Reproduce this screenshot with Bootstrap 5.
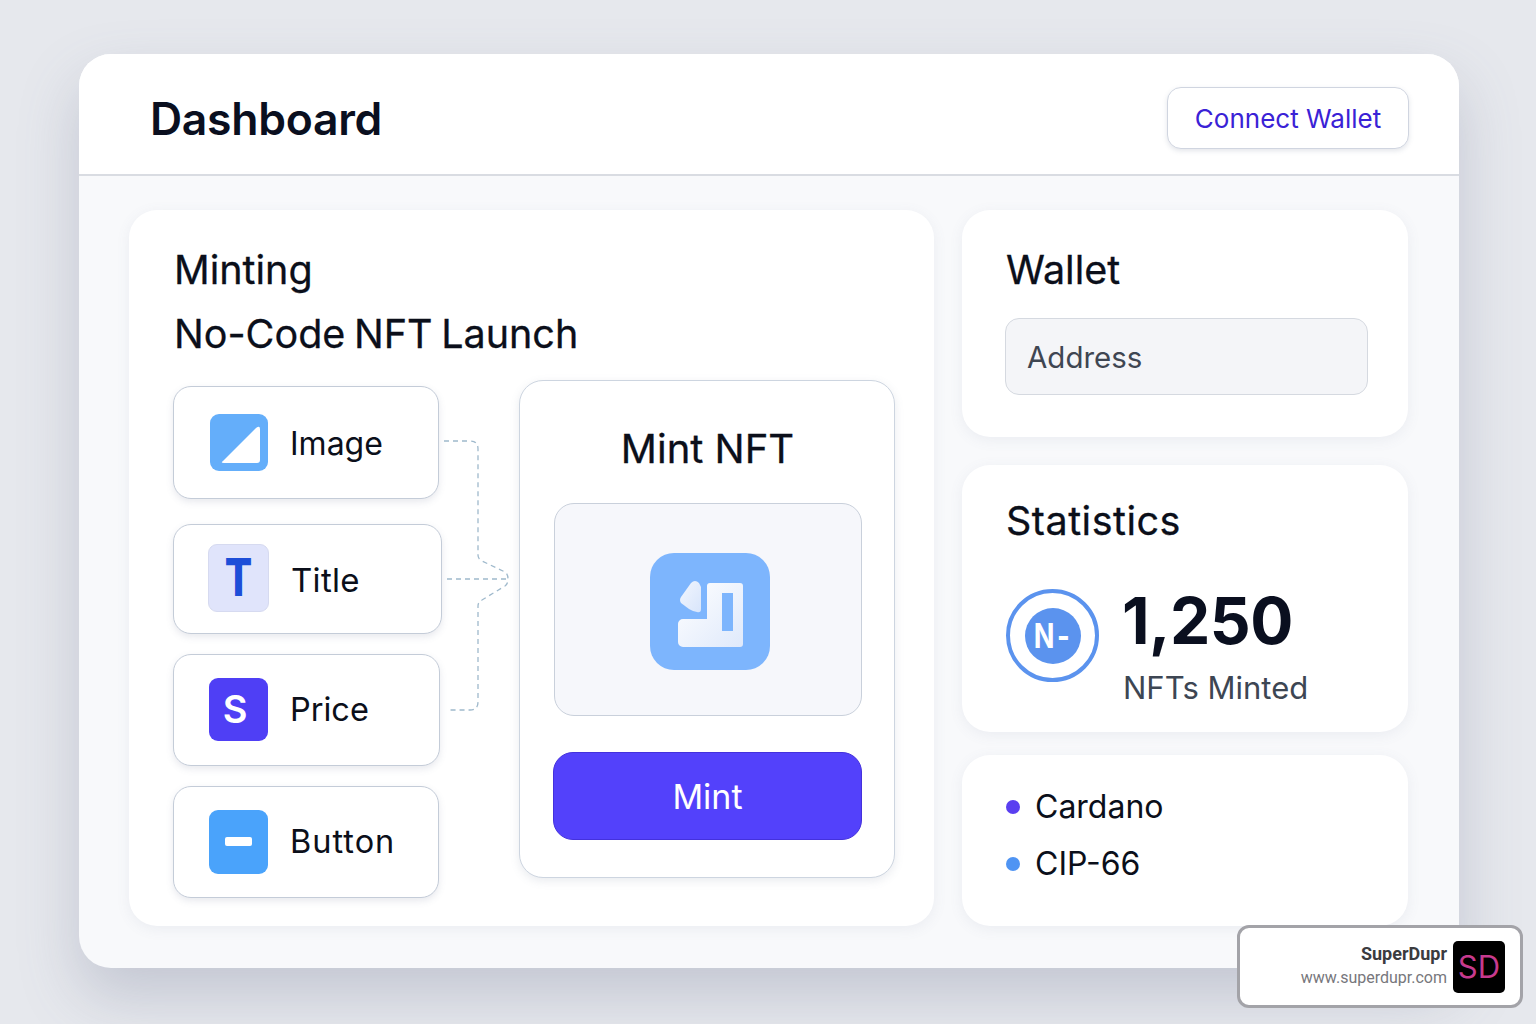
<!DOCTYPE html>
<html lang="en"><head><meta charset="utf-8"><title>Dashboard</title>
<link href="https://cdn.jsdelivr.net/npm/bootstrap@5.3.0/dist/css/bootstrap.min.css" rel="stylesheet">
<style>
html,body{height:100%}
body{background:#e6e8ed;font-family:Inter,"Liberation Sans",sans-serif;color:#0b0f1a;padding:54px 77px 56px 79px;overflow:hidden;position:relative;min-height:1024px}
.app-win{height:914px;border-radius:32px;background:#f8f9fb;box-shadow:0 28px 60px rgba(95,105,135,.26);overflow:hidden}
.app-head{height:122px;background:#fff;border-bottom:2px solid #d9dce2;padding:8px 50px 0 71px}
.app-title{font-size:44.5px;font-weight:600;margin:4px 0 0;letter-spacing:-.3px;color:#0a0f1f}
.conn-btn{width:242px;height:62px;border:1.5px solid #d0d5e0;border-radius:14px;background:#fff;color:#3a22d6;font-size:26px;font-weight:400;box-shadow:0 2px 5px rgba(100,110,140,.18);padding:0}
.app-body{padding:34px 51px 42px 50px;gap:28px}
.pane{border:0;border-radius:28px;background:#fff;box-shadow:0 3px 14px rgba(100,110,140,.09)}
.pane-main{width:805px;height:716px;padding:28px 39px 28px 44px}
.side-col{width:446px;gap:28px}
.pane-h{font-size:39.5px;font-weight:400;line-height:64px;margin:0 0 0 1px;color:#0b0f1a;-webkit-text-stroke:.3px #0b0f1a;word-spacing:-2.5px}
.builder{margin-top:14px;position:relative}
.block-col{width:346px;padding-top:6px}
.block{height:112px;background:#fff;border:1px solid #c4ccd8;border-radius:18px;box-shadow:0 3px 7px rgba(100,110,140,.15);padding-left:35px;gap:21px;font-size:32.5px;color:#0b0f1a}
.b1{width:266px;height:113px;margin-bottom:25px}.b2{width:269px;height:110px;margin-bottom:20px}.b3{width:267px;margin-bottom:20px}.b4{width:266px}
.b1 .blab{font-size:32px;margin-top:3px}
.b2 .blab{font-size:33px;letter-spacing:.3px;margin-top:3px;margin-left:1px}
.b4 .blab{letter-spacing:1px}
.glyph{width:60px;flex:none;border-radius:9px;color:#fff;overflow:hidden}
.g-img{height:57px;width:58px;margin-left:1px;margin-right:1px;background:#64aefa}.g-title{height:68px;width:61px;background:#e0e4fb;border:1px solid #d6daf0;color:#1d4ed8;font-weight:800;font-size:52px;margin-left:-1px;margin-top:-2px}
.g-price{height:63px;background:#4f3ff5;font-size:38px;font-weight:600;width:59px;margin-right:1px;padding-right:7px;margin-top:-1px}.g-btn{height:64px;width:59px;margin-right:1px;background:#4aa3fb}
.g-title span{display:block;transform:scaleX(.78);line-height:1}
.g-dash{width:27px;height:9px;border-radius:2px;background:#fff;margin-top:-2px}
.links{position:absolute;left:0;top:0;pointer-events:none}
.mint-box{width:376px;height:498px;border:1px solid #cdd5e0;border-radius:24px;background:#fff;box-shadow:0 3px 10px rgba(100,110,140,.14);padding:0 32px 37px 33px}
.mint-h{font-size:40px;font-weight:400;line-height:50px;text-align:center;margin:43px 0 29px;-webkit-text-stroke:.3px #0b0f1a}
.mint-prev{height:213px;width:308px;margin-left:1px;background:#f6f7fb;border:1px solid #c9d0db;border-radius:20px;padding:4px 0 0 4px}
.mint-btn{width:309px;height:88px;margin-top:36px;background:#5341fb;border:1px solid #4431dc;border-radius:20px;color:#fff;font-size:34px;padding:0}
.mint-btn:hover{background:#5341fb;color:#fff}
.pane-w{height:227px;padding:28px 40px 0 44px}
.pane-s{height:267px;padding:24px 40px 0 44px}
.pane-l{height:171px;padding:23px 40px 0 44px;margin-top:-5px}
.side-h{font-size:39.5px;font-weight:400;line-height:64px;margin:0;-webkit-text-stroke:.3px #0b0f1a}
.side-h.wide{letter-spacing:.5px}
.addr{height:77px;background:#f4f5f8;border:1px solid #d5d9e0;border-radius:14px;font-size:29.5px;padding:0 21px;margin-top:16px;width:363px;margin-left:-1px}
.addr::placeholder{color:#3f4652;opacity:1}
.stat-ring{width:93px;height:93px;border:4px solid #5b93ee;border-radius:50%;flex:none}
.stat-in{width:56px;height:56px;border-radius:50%;background:#5b93ee;color:#fff;font-weight:700;font-size:34px;line-height:1}
.stat-in span{display:block;transform:scaleX(.8);letter-spacing:3px}
.stat-num{font-size:64px;font-weight:700;line-height:64px;letter-spacing:-.5px;color:#0a0f1f}
.stat-lab{font-size:31px;line-height:40px;color:#3d4653;margin-top:15px;margin-left:1px}
.stat-row{gap:23px;margin-top:36px}
.chain{font-size:32px;line-height:57px;gap:15px;color:#0b0f1a}
.dot{width:14px;height:14px;border-radius:50%;flex:none}
.d-a{background:#5a3ff0}.d-b{background:#4f94f3}
.badge-sd{position:absolute;left:1237px;top:925px;width:286px;height:83px;background:#fff;border:3px solid #a3a3a8;border-radius:12px;padding-right:15px;gap:6px;font-family:Roboto,sans-serif}
.sd-n{font-size:18px;font-weight:700;color:#3b3b3f;line-height:24px;margin-top:-2px}
.sd-u{font-size:16px;color:#77777c;line-height:24px}
.sd-l{width:52px;height:52px;background:#000;border-radius:5px;color:#c73a8e;font-size:31px;font-family:Inter,sans-serif;font-weight:400;padding-top:1px}
</style></head>
<body>
<div class="app-win d-flex flex-column">
  <header class="app-head d-flex align-items-center justify-content-between">
    <h1 class="app-title">Dashboard</h1>
    <button class="btn conn-btn" type="button">Connect Wallet</button>
  </header>
  <main class="app-body d-flex">
    <section class="card pane pane-main">
      <h2 class="pane-h">Minting</h2>
      <h2 class="pane-h">No-Code NFT Launch</h2>
      <div class="builder d-flex">
        <div class="block-col">
          <div class="block b1 d-flex align-items-center"><div class="glyph g-img"><svg width="58" height="57" viewBox="1 0 58 57"><path d="M14 47 47 14Q51 11 51 15V46Q51 49 48 49H15Q11 49 14 47Z" fill="#fff"/></svg></div><span class="blab">Image</span></div>
          <div class="block b2 d-flex align-items-center"><div class="glyph g-title d-flex align-items-center justify-content-center"><span>T</span></div><span class="blab">Title</span></div>
          <div class="block b3 d-flex align-items-center"><div class="glyph g-price d-flex align-items-center justify-content-center">S</div><span class="blab">Price</span></div>
          <div class="block b4 d-flex align-items-center"><div class="glyph g-btn d-flex align-items-center justify-content-center"><div class="g-dash"></div></div><span class="blab">Button</span></div>
        </div>
        <svg class="links" width="346" height="520" viewBox="173 380 346 520" fill="none" stroke="#9fb9cc" stroke-width="1.3" stroke-dasharray="5 4"><path d="M444 441H470Q478 441 478 449V555Q478 559 482 561L505 572Q508 574 508 579Q508 584 505 586L482 600Q478 602 478 606V702Q478 710 470 710H447"/><path d="M447 579H507"/></svg>
        <div class="mint-box">
          <h3 class="mint-h">Mint NFT</h3>
          <div class="mint-prev d-flex align-items-center justify-content-center">
            <svg width="120" height="117" viewBox="0 0 120 117"><defs><linearGradient id="gr" x1="0" y1="0" x2="1" y2="1"><stop offset="0" stop-color="#fff"/><stop offset="1" stop-color="#dfe9fb"/></linearGradient><linearGradient id="gk" x1="0" y1="0" x2="1" y2="1"><stop offset="0" stop-color="#f2f6fe"/><stop offset="1" stop-color="#d8e5fb"/></linearGradient></defs><rect width="120" height="117" rx="24" fill="#7db5fd"/><path d="M33 66H57V33a3 3 0 0 1 3-3H90a3 3 0 0 1 3 3V91a3 3 0 0 1-3 3H33a5 5 0 0 1-5-5V71a5 5 0 0 1 5-5z" fill="url(#gr)"/><rect x="72" y="40" width="11" height="38" fill="#7db5fd"/><path d="M31 44 41 30Q45 26 49 30L51 34V56Q51 60 47 59L43 58Q41 57 39 56L31 50Q29 47 31 44Z" fill="url(#gk)"/></svg>
          </div>
          <button class="btn mint-btn" type="button">Mint</button>
        </div>
      </div>
    </section>
    <aside class="side-col d-flex flex-column">
      <section class="card pane pane-w"><h2 class="side-h">Wallet</h2><input class="form-control addr" placeholder="Address" aria-label="Address"></section>
      <section class="card pane pane-s"><h2 class="side-h wide">Statistics</h2>
        <div class="d-flex stat-row">
          <div class="stat-ring d-flex align-items-center justify-content-center"><div class="stat-in d-flex align-items-center justify-content-center"><span>N-</span></div></div>
          <div><div class="stat-num">1,250</div><div class="stat-lab">NFTs Minted</div></div>
        </div>
      </section>
      <section class="card pane pane-l">
        <div class="chain d-flex align-items-center"><span class="dot d-a"></span>Cardano</div>
        <div class="chain d-flex align-items-center"><span class="dot d-b"></span>CIP-66</div>
      </section>
    </aside>
  </main>
</div>
<div class="badge-sd d-flex align-items-center justify-content-end">
  <div class="text-end"><div class="sd-n">SuperDupr</div><div class="sd-u">www.superdupr.com</div></div>
  <div class="sd-l d-flex align-items-center justify-content-center">SD</div>
</div>
</body></html>
